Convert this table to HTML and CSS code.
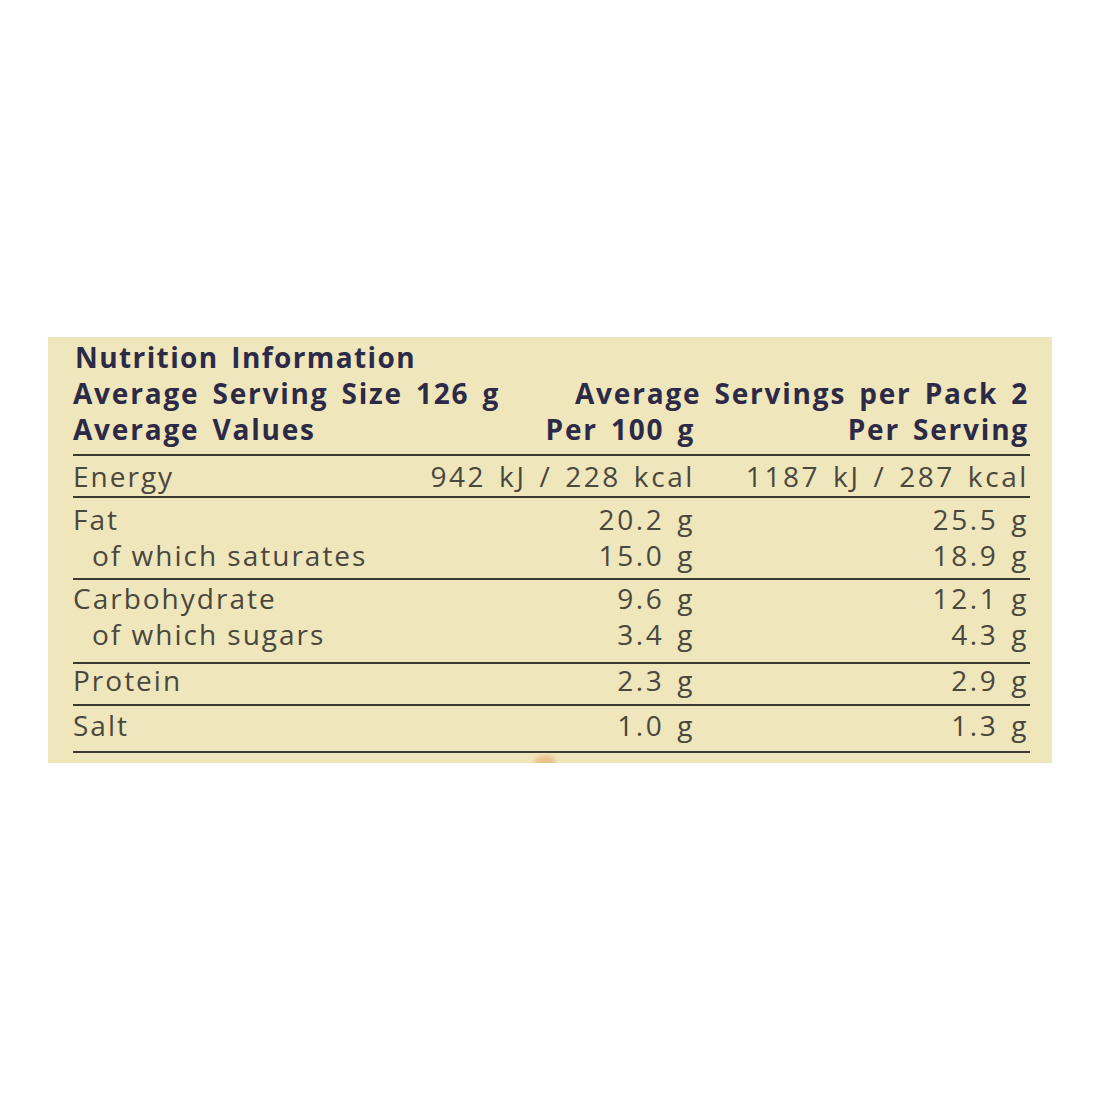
FILE: index.html
```html
<!DOCTYPE html>
<html lang="en">
<head>
<meta charset="utf-8">
<title>Nutrition Information</title>
<link rel="stylesheet" href="styles.css">
</head>
<body>
<div class="page">
  <section class="panel">
    <div class="head">
      <div class="h-title">Nutrition Information</div>
      <div class="h-left">Average Serving Size 126 g</div>
      <div class="h-right">Average Servings per Pack 2</div>
      <div class="h-left">Average Values</div>
      <div class="h-num">Per 100 g</div>
      <div class="h-num h-last">Per Serving</div>
    </div>
    <div class="group g-energy">
      <div class="lbl">Energy</div><div class="num">942 kJ / 228 kcal</div><div class="num last">1187 kJ / 287 kcal</div>
    </div>
    <div class="group g-fat">
      <div class="lbl">Fat</div><div class="num">20.2 g</div><div class="num last">25.5 g</div>
      <div class="lbl sub">of which saturates</div><div class="num">15.0 g</div><div class="num last">18.9 g</div>
    </div>
    <div class="group g-carb">
      <div class="lbl">Carbohydrate</div><div class="num">9.6 g</div><div class="num last">12.1 g</div>
      <div class="lbl sub">of which sugars</div><div class="num">3.4 g</div><div class="num last">4.3 g</div>
    </div>
    <div class="group g-protein">
      <div class="lbl">Protein</div><div class="num">2.3 g</div><div class="num last">2.9 g</div>
    </div>
    <div class="group g-salt final">
      <div class="lbl">Salt</div><div class="num">1.0 g</div><div class="num last">1.3 g</div>
    </div>
    <span class="blob"></span>
  </section>
</div>
</body>
</html>
```

FILE: styles.css
```css
html, body {
  margin: 0;
  padding: 0;
  background: #ffffff;
}

.page {
  padding: 337px 0 0 48px;
}

.panel {
  position: relative;
  width: 1004px;
  height: 426px;
  box-sizing: border-box;
  padding: 2px 22px 0 25px;
  background: #efe6bc;
  font-family: "Open Sans", Lato, sans-serif;
  overflow: hidden;
}

.head {
  display: grid;
  grid-template-columns: minmax(0, 1fr) 300px 335px;
  font-weight: 700;
  font-size: 28px;
  letter-spacing: 1.8px;
  word-spacing: 4px;
  line-height: 36px;
  color: #2c2a47;
  padding-bottom: 7px;
}

.h-title {
  grid-column: 1 / 4;
  padding-left: 2px;
  letter-spacing: 1.4px;
}

.h-left {
  grid-column: 1 / 2;
  white-space: nowrap;
}

.h-right {
  grid-column: 2 / 4;
  text-align: right;
  white-space: nowrap;
  padding-right: 1px;
}

.h-num {
  text-align: right;
  white-space: nowrap;
}

.h-last {
  padding-right: 1px;
}

.group {
  display: grid;
  grid-template-columns: minmax(0, 1fr) 300px 335px;
  border-top: 2px solid #3b3a31;
  font-size: 28px;
  letter-spacing: 2px;
  line-height: 36px;
  color: #4a473e;
}

.g-energy {
  padding: 2px 0 2px;
}

.g-fat {
  padding: 3px 0 5px;
}

.g-carb {
  padding: 0 0 10px;
}

.g-protein {
  padding: 0 0 8px;
  line-height: 32px;
}

.g-salt {
  padding: 1px 0 8px;
}

.group.final {
  border-bottom: 2px solid #3b3a31;
}

.lbl {
  white-space: nowrap;
}

.sub {
  padding-left: 19px;
}

.num {
  text-align: right;
  white-space: nowrap;
  letter-spacing: 2.6px;
  word-spacing: 3px;
}

.num.last {
  padding-right: 1px;
}

.blob {
  position: absolute;
  left: 486px;
  bottom: -6px;
  width: 22px;
  height: 14px;
  border-radius: 50%;
  background: #e9b47a;
  filter: blur(2px);
  opacity: 0.7;
}
```
